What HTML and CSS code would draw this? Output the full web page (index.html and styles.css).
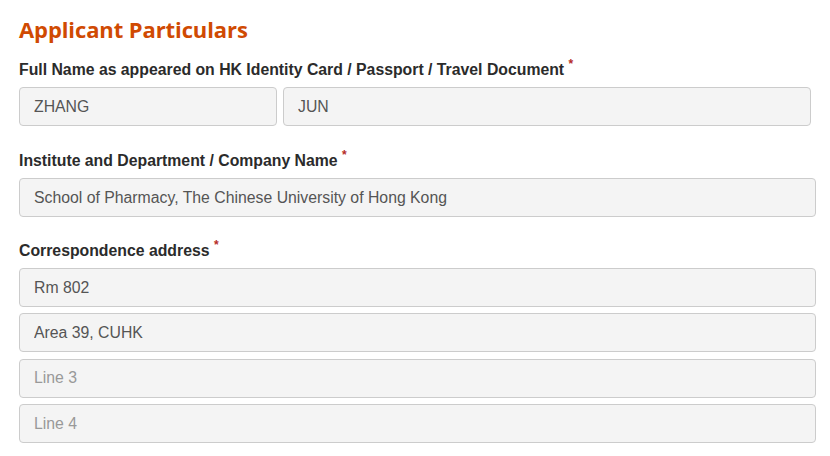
FILE: index.html
```html
<!DOCTYPE html>
<html lang="en">
<head>
<meta charset="utf-8">
<title>Applicant Particulars</title>
<link rel="stylesheet" href="styles.css">
</head>
<body>
<form class="page">
  <h2 class="section-title">Applicant Particulars</h2>

  <div class="form-group">
    <label class="field-label">Full Name as appeared on HK Identity Card / Passport / Travel Document <span class="req">*</span></label>
    <div class="name-row">
      <input class="field" type="text" value="ZHANG">
      <input class="field" type="text" value="JUN">
    </div>
  </div>

  <div class="form-group first-gap">
    <label class="field-label">Institute and Department / Company Name <span class="req">*</span></label>
    <input class="field" type="text" value="School of Pharmacy, The Chinese University of Hong Kong">
  </div>

  <div class="form-group">
    <label class="field-label">Correspondence address <span class="req">*</span></label>
    <div class="stack">
      <input class="field" type="text" value="Rm 802">
      <input class="field" type="text" value="Area 39, CUHK">
      <input class="field" type="text" placeholder="Line 3">
      <input class="field" type="text" placeholder="Line 4">
    </div>
  </div>
</form>
</body>
</html>
```

FILE: styles.css
```css
* { box-sizing: border-box; }

html, body {
  margin: 0;
  background: #ffffff;
}

.page {
  width: 816px;
  padding: 14px 0 0 19px;
  font-family: "Liberation Sans", Arial, sans-serif;
  color: #333333;
}

.section-title {
  margin: 0 0 16px;
  font-family: "Open Sans", "Liberation Sans", sans-serif;
  font-weight: 700;
  font-size: 22px;
  line-height: 30px;
  color: #d04a02;
  letter-spacing: -0.1px;
}

.form-group {
  margin-top: 24px;
}

.form-group:first-of-type {
  margin-top: 0;
}

.form-group.first-gap {
  margin-top: 25px;
}

.field-label {
  display: block;
  margin-bottom: 7px;
  font-size: 15.8px;
  line-height: 20px;
  font-weight: 700;
  color: #2b2b2b;
}

.req {
  color: #b52b27;
  font-size: 12px;
  line-height: 1;
  vertical-align: top;
  position: relative;
  top: -2px;
}

.name-row {
  display: grid;
  grid-template-columns: 258px 528px;
  gap: 6px;
}

.stack {
  display: flex;
  flex-direction: column;
  gap: 6.4px;
}

.field {
  display: block;
  width: 100%;
  height: 39px;
  margin: 0;
  padding: 0 14px;
  border: 1px solid #cccccc;
  border-radius: 4px;
  background: #f4f4f4;
  font-family: "Liberation Sans", Arial, sans-serif;
  font-size: 15.8px;
  color: #555555;
  outline: none;
}

.field::placeholder {
  color: #999999;
  opacity: 1;
}
```
